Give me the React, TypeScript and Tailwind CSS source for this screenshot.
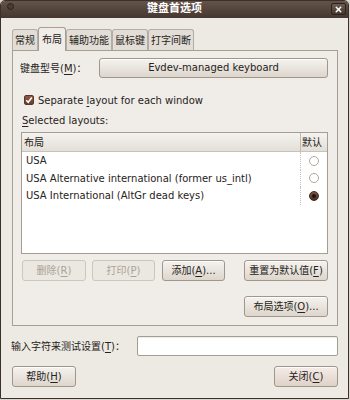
import React from "react";
import { X } from "lucide-react";

const FONT = { fontFamily: '"DejaVu Sans", "Noto Sans CJK SC", sans-serif' };

function U({ children }: { children: React.ReactNode }) {
  return <span className="underline underline-offset-[2px] decoration-[1px]">{children}</span>;
}

function Btn({
  children,
  className = "",
  disabled = false,
  tone = "normal",
}: {
  children: React.ReactNode;
  className?: string;
  disabled?: boolean;
  tone?: "normal" | "default";
}) {
  const base =
    "flex items-center justify-center rounded-[3px] border text-[10px] leading-none shadow-[inset_0_1px_0_rgba(255,255,255,0.8)]";
  const look = disabled
    ? "border-[#cdc6bd] bg-[#ebe7e1] text-[#aaa299] shadow-none"
    : tone === "default"
    ? "border-[#a0968b] bg-gradient-to-b from-[#f4ede8] to-[#e0d1c8] text-[#262320]"
    : "border-[#a0968b] bg-gradient-to-b from-[#f5f2ee] to-[#ddd6cd] text-[#262320]";
  return <div className={`${base} ${look} ${className}`}>{children}</div>;
}

function Radio({ on }: { on?: boolean }) {
  return on ? (
    <div className="flex h-[10px] w-[10px] items-center justify-center rounded-full border border-[#3d2a20] bg-gradient-to-b from-[#7a5442] to-[#4b3125]">
      <div className="h-[4px] w-[4px] rounded-full bg-[#1f130e]" />
    </div>
  ) : (
    <div className="h-[10px] w-[10px] rounded-full border border-[#b3a79c] bg-white" />
  );
}

const LAYOUTS = [
  { name: "USA", on: false },
  { name: "USA Alternative international (former us_intl)", on: false },
  { name: "USA International (AltGr dead keys)", on: true },
];

const TABS = ["常规", "布局", "辅助功能", "鼠标键", "打字间断"];

export default function App() {
  return (
    <div className="h-[400px] w-[350px] bg-[#d9d5cf]" style={FONT}>
      <div className="flex h-[399px] w-[349px] flex-col overflow-hidden rounded-t-[5px] border border-[#3a2f29] bg-[#edeae4]">
        {/* Title bar */}
        <div className="relative flex h-[17px] shrink-0 items-center justify-center bg-gradient-to-b from-[#64534a] to-[#45372f]">
          <div className="absolute left-[6px] top-[2px] h-[7px] w-[7px] rounded-full border border-[#2c221d] bg-[#4a3c34]" />
          <span className="text-[11px] font-bold text-white">键盘首选项</span>
          <div className="absolute right-[2px] top-[2px] flex h-[12px] w-[15px] items-center justify-center rounded-[2px] border border-[#2c221d] bg-gradient-to-b from-[#6d5c52] to-[#463830]">
            <X size={9} strokeWidth={4} color="#ffffff" />
          </div>
        </div>

        <div className="flex flex-1 flex-col pl-[11px] pr-[10px] pt-[9px] text-[#262320]">
          {/* Tabs */}
          <div className="flex items-end text-[10px]">
            {TABS.map((t) =>
              t === "布局" ? (
                <div
                  key={t}
                  className="relative z-10 -mb-px flex h-[24px] items-center rounded-t-[3px] border border-b-0 border-[#a89f94] bg-[#f0ede8] px-[3px]"
                >
                  {t}
                </div>
              ) : (
                <div
                  key={t}
                  className="flex h-[21px] items-center rounded-t-[3px] border border-b-0 border-[#b5ada3] bg-[#e2ddd6] px-[2px]"
                >
                  {t}
                </div>
              )
            )}
          </div>

          {/* Notebook panel */}
          <div className="flex h-[276px] flex-col border border-[#a89f94] bg-[#f0ede8] pl-[7px] pr-[9px] pt-[7px]">
            <div className="flex h-[20px] items-center text-[10px]">
              <span>
                键盘型号(<U>M</U>)：
              </span>
              <Btn className="ml-auto h-[20px] w-[229px]">Evdev-managed keyboard</Btn>
            </div>

            <div className="mt-[15px] flex h-[14px] items-center text-[10px]">
              <div className="ml-[4px] flex h-[10px] w-[10px] items-center justify-center rounded-[2px] border border-[#5a3626] bg-gradient-to-b from-[#8d5a43] to-[#6a3f2c]">
                <svg width="8" height="8" viewBox="0 0 8 8">
                  <path d="M1.2 4.2 L3.2 6.2 L6.8 1.6" stroke="#fff" strokeWidth="1.6" fill="none" />
                </svg>
              </div>
              <span className="ml-[4px]">
                Separate <U>l</U>ayout for each window
              </span>
            </div>

            <div className="mt-[7px] flex h-[13px] items-center pl-[2px] text-[10px]">
              <span>
                <U>S</U>elected layouts:
              </span>
            </div>

            {/* Tree view */}
            <div className="ml-[1px] mt-[5px] flex h-[122px] flex-col border border-[#a59d92] bg-white text-[10px]">
              <div className="flex h-[19px] shrink-0 border-b border-[#c9c2b8] bg-gradient-to-b from-[#f5f3f0] to-[#e3ded7]">
                <div className="flex flex-1 items-center border-r border-[#c2bab0] pl-[2px]">布局</div>
                <div className="flex w-[26px] items-center pl-[1px]">默认</div>
              </div>
              {LAYOUTS.map((l) => (
                <div key={l.name} className="flex h-[17.5px] shrink-0">
                  <div className="flex flex-1 items-center border-r border-dotted border-[#c8c2ba] pl-[4px]">
                    {l.name}
                  </div>
                  <div className="flex w-[26px] items-center justify-center">
                    <Radio on={l.on} />
                  </div>
                </div>
              ))}
            </div>

            {/* Action buttons */}
            <div className="mt-[6px] flex h-[21px] pl-[2px]">
              <Btn disabled className="w-[64px]">
                删除(<U>R</U>)
              </Btn>
              <Btn disabled className="ml-[6px] w-[63px]">
                打印(<U>P</U>)
              </Btn>
              <Btn className="ml-[7px] w-[63px]">
                添加(<U>A</U>)...
              </Btn>
              <Btn className="ml-auto w-[84px]">
                重置为默认值(<U>F</U>)
              </Btn>
            </div>

            <div className="mt-[15px] flex h-[21px] justify-end">
              <Btn className="w-[84px]">
                布局选项(<U>O</U>)...
              </Btn>
            </div>
          </div>

          {/* Test input */}
          <div className="mt-[10px] flex h-[20px] items-center text-[10px]">
            <span className="-ml-[1px]">
              输入字符来测试设置(<U>T</U>)：
            </span>
            <div className="ml-auto h-[20px] w-[201px] rounded-[2px] border border-[#a59d92] bg-white shadow-[inset_0_1px_1px_rgba(0,0,0,0.08)]" />
          </div>

          {/* Bottom buttons */}
          <div className="mt-[10px] flex h-[21px]">
            <Btn className="w-[64px]">
              帮助(<U>H</U>)
            </Btn>
            <Btn tone="default" className="ml-auto w-[64px]">
              关闭(<U>C</U>)
            </Btn>
          </div>
        </div>
      </div>
    </div>
  );
}
